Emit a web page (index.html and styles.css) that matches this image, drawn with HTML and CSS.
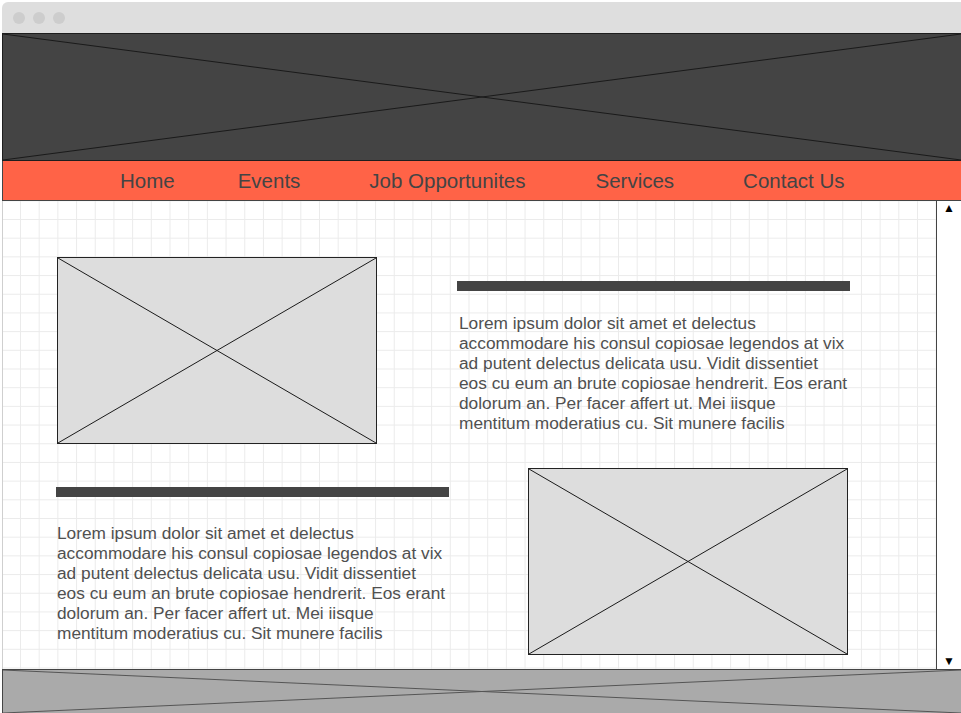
FILE: index.html
```html
<!DOCTYPE html>
<html lang="en">
<head>
  <meta charset="UTF-8" />
  <title>Wireframe - Home</title>
  <meta name="viewport" content="width=device-width, initial-scale=1" />
  <link rel="stylesheet" href="styles.css">
</head>
<body>

  <div class="window">

    <!-- TITLE BAR -->
    <div class="titlebar">
      <span class="dot"></span>
      <span class="dot"></span>
      <span class="dot"></span>
    </div>

    <!-- HEADER IMAGE -->
    <header class="banner">
      <svg class="cross" viewBox="0 0 100 100" preserveAspectRatio="none">
        <line x1="0" y1="0" x2="100" y2="100" />
        <line x1="0" y1="100" x2="100" y2="0" />
      </svg>
    </header>

    <!-- NAV -->
    <nav class="nav">
      <a href="#">Home</a>
      <a href="#">Events</a>
      <a href="#">Job Opportunites</a>
      <a href="#">Services</a>
      <a href="#">Contact Us</a>
    </nav>

    <!-- MAIN -->
    <div class="main">
      <div class="content">

        <div class="row row-top">
          <div class="picture">
            <svg class="cross" viewBox="0 0 100 100" preserveAspectRatio="none">
              <line x1="0" y1="0" x2="100" y2="100" />
              <line x1="0" y1="100" x2="100" y2="0" />
            </svg>
          </div>
          <div class="article article-right">
            <div class="heading-bar"></div>
            <p>Lorem ipsum dolor sit amet et delectus accommodare his consul copiosae legendos at vix ad putent delectus delicata usu. Vidit dissentiet eos cu eum an brute copiosae hendrerit. Eos erant dolorum an. Per facer affert ut. Mei iisque mentitum moderatius cu. Sit munere facilis</p>
          </div>
        </div>

        <div class="row row-bottom">
          <div class="article article-left">
            <div class="heading-bar"></div>
            <p>Lorem ipsum dolor sit amet et delectus accommodare his consul copiosae legendos at vix ad putent delectus delicata usu. Vidit dissentiet eos cu eum an brute copiosae hendrerit. Eos erant dolorum an. Per facer affert ut. Mei iisque mentitum moderatius cu. Sit munere facilis</p>
          </div>
          <div class="picture picture-right">
            <svg class="cross" viewBox="0 0 100 100" preserveAspectRatio="none">
              <line x1="0" y1="0" x2="100" y2="100" />
              <line x1="0" y1="100" x2="100" y2="0" />
            </svg>
          </div>
        </div>

      </div>

      <!-- SCROLLBAR -->
      <div class="scrollbar">
        <span class="arrow">&#9650;</span>
        <span class="arrow">&#9660;</span>
      </div>
    </div>

    <!-- FOOTER -->
    <footer class="footer">
      <svg class="cross" viewBox="0 0 100 100" preserveAspectRatio="none">
        <line x1="0" y1="0" x2="100" y2="100" />
        <line x1="0" y1="100" x2="100" y2="0" />
      </svg>
    </footer>

  </div>

</body>
</html>
```

FILE: styles.css
```css
* {
  box-sizing: border-box;
}

html, body {
  margin: 0;
  padding: 0;
  background: #ffffff;
  font-family: "Liberation Sans", Arial, sans-serif;
  overflow: hidden;
}

.window {
  margin: 2px 0 0 2px;
  width: 959px;
  height: 740px;
  display: flex;
  flex-direction: column;
}

/* TITLE BAR */
.titlebar {
  height: 31px;
  background-color: #dedede;
  border-radius: 6px 0 0 0;
  display: flex;
  align-items: center;
  gap: 8px;
  padding-left: 11px;
}

.dot {
  width: 12px;
  height: 12px;
  border-radius: 50%;
  background-color: #cdcdcd;
}

/* X placeholder */
.cross {
  display: block;
  width: 100%;
  height: 100%;
}

.cross line {
  stroke: #1a1a1a;
  stroke-width: 1px;
  vector-effect: non-scaling-stroke;
}

/* HEADER */
.banner {
  height: 128px;
  background-color: #444444;
  border: 1px solid #1e1e1e;
  border-right: none;
}

/* NAV */
.nav {
  height: 40px;
  background-color: #ff6347;
  border-left: 1px solid #444;
  border-bottom: 1px solid #444;
  display: flex;
  align-items: center;
  padding: 1px 0 0 117px;
}

.nav a {
  color: #444444;
  text-decoration: none;
  font-size: 20.5px;
}

.nav a:nth-child(2) { margin-left: 63px; }
.nav a:nth-child(3) { margin-left: 69px; }
.nav a:nth-child(4) { margin-left: 70px; }
.nav a:nth-child(5) { margin-left: 69px; }

/* MAIN */
.main {
  height: 468px;
  display: flex;
  border-left: 1px solid #cfcfcf;
}

.content {
  flex: 1;
  background-color: #ffffff;
  background-image:
    linear-gradient(to right, #ebebeb 1px, transparent 1px),
    linear-gradient(to bottom, #ebebeb 1px, transparent 1px);
  background-size: 18.7px 18.7px;
  background-position: 17px 18px;
  padding-top: 56px;
}

.row {
  display: flex;
}

.row-top {
  padding-left: 54px;
}

.row-bottom {
  margin-top: 24px;
  padding-left: 53px;
}

.picture {
  width: 320px;
  height: 187px;
  background-color: #dddddd;
  border: 1px solid #222;
  flex-shrink: 0;
}

.picture-right {
  margin-left: 79px;
}

.article {
  width: 393px;
}

.article-right {
  margin-left: 80px;
  padding-top: 24px;
}

.article-left {
  padding-top: 19px;
}

.heading-bar {
  height: 10px;
  background-color: #444444;
}

.article p {
  margin: 22px 0 0 2px;
  font-size: 17.3px;
  line-height: 20px;
  color: #505050;
  width: 389px;
}

.article-left p {
  margin-top: 26px;
  margin-left: 1px;
}

/* SCROLLBAR */
.scrollbar {
  width: 25px;
  border-left: 1px solid #444;
  background: #ffffff;
  display: flex;
  flex-direction: column;
  justify-content: space-between;
  align-items: center;
  padding: 0 0 1px;
  font-size: 12px;
  line-height: 14px;
  color: #000;
}

/* FOOTER */
.footer {
  height: 44px;
  background-color: #aaaaaa;
  border: 1px solid #444;
  border-right: none;
  border-bottom: none;
}

.footer .cross line {
  stroke: #555555;
}
```
